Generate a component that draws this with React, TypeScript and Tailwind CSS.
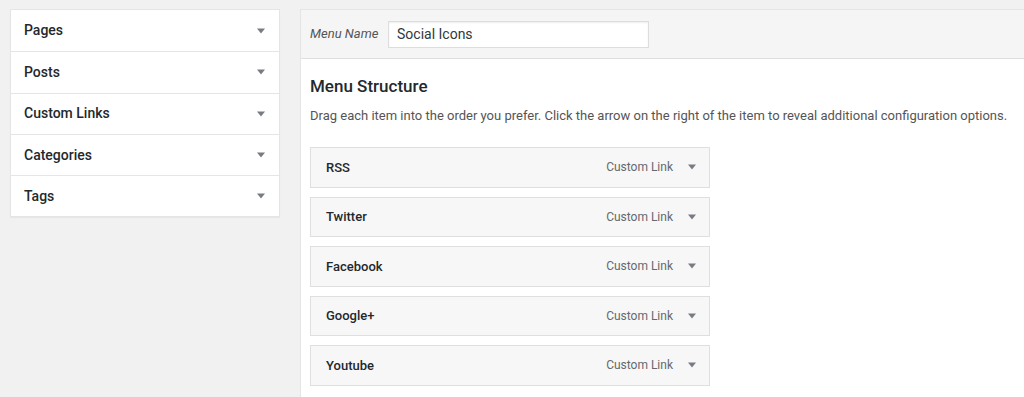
import React from 'react';

const SECTIONS = ['Pages', 'Posts', 'Custom Links', 'Categories', 'Tags'];
const ITEMS = ['RSS', 'Twitter', 'Facebook', 'Google+', 'Youtube'];

const Arrow = () => (
  <svg width="10" height="8" viewBox="0 0 10 8" className="shrink-0">
    <path d="M1 1.5h8L5 6.5z" fill="#787c82" />
  </svg>
);

export default function App() {
  return (
    <div
      className="w-[1024px] h-[397px] overflow-hidden bg-[#f1f1f1] flex items-start gap-[20px] pl-[10px] pt-[9px] text-[#23282d]"
      style={{ fontFamily: '"Segoe UI", Roboto, "Noto Sans", sans-serif' }}
    >
      {/* accordion of item sources */}
      <div className="w-[270px] shrink-0 bg-white border border-[#e5e5e5] shadow-[0_1px_1px_rgba(0,0,0,0.04)]">
        {SECTIONS.map((s, i) => (
          <div
            key={s}
            className={`h-[41.3px] flex items-center justify-between pl-[13px] pr-[13px] ${i > 0 ? 'border-t border-[#e5e5e5]' : ''}`}
          >
            <span className="text-[14px] font-medium">{s}</span>
            <Arrow />
          </div>
        ))}
      </div>

      {/* menu editor */}
      <div className="flex-1 h-[400px] bg-white border-l border-t border-[#e5e5e5]">
        <div className="h-[49px] bg-[#f5f5f5] border-b border-[#dfdfdf] flex items-center pl-[9px]">
          <label className="w-[78px] text-[13px] italic text-[#555]">Menu Name</label>
          <div className="w-[261px] h-[27px] bg-white border border-[#ddd] shadow-[inset_0_1px_2px_rgba(0,0,0,0.07)] flex items-center px-[8px] text-[14px] text-[#32373c]">
            Social Icons
          </div>
        </div>
        <div className="pl-[9px] pt-[16px]">
          <h3 className="text-[17px] font-medium leading-[22px]">Menu Structure</h3>
          <p className="text-[13px] text-[#555] mt-[10px] leading-[18px] whitespace-nowrap">
            Drag each item into the order you prefer. Click the arrow on the right of the item to reveal additional configuration options.
          </p>
          <div className="mt-[22px] w-[400px] flex flex-col gap-[9px]">
            {ITEMS.map((it) => (
              <div
                key={it}
                className="h-[40.5px] bg-[#f7f7f7] border border-[#dfdfdf] flex items-center pl-[15px] pr-[12px]"
              >
                <span className="text-[13px] font-medium flex-1">{it}</span>
                <span className="text-[12px] text-[#646970] mr-[14px]">Custom Link</span>
                <Arrow />
              </div>
            ))}
          </div>
        </div>
      </div>
    </div>
  );
}
